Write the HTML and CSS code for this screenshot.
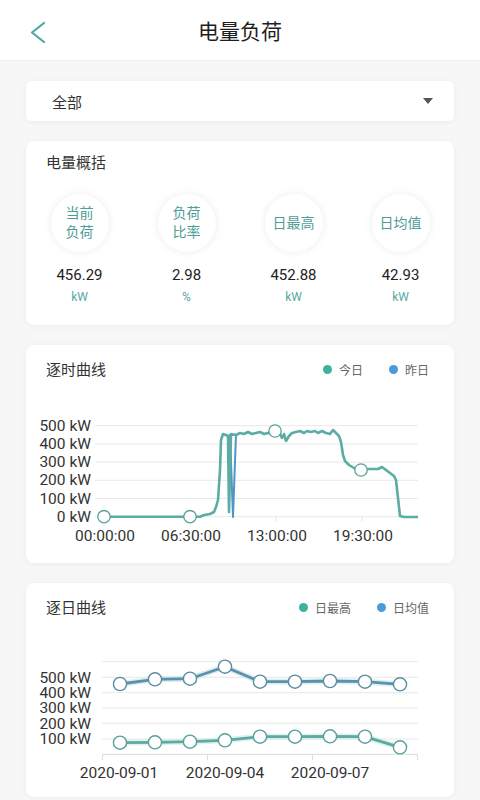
FILE: index.html
```html
<!DOCTYPE html>
<html>
    <head>
        <meta http-equiv="content-type" content="text/html; charset=utf-8" />
        <meta name="viewport" content="width=device-width, initial-scale=1.0">
        <title>电量负荷</title>
        <link rel="stylesheet" href="styles.css">
    </head>
    <body>
        <header class="topbar">
            <svg class="back" width="60" height="60" viewBox="0 0 60 60">
                <polyline points="44,23 32,32.5 44,42" fill="none" stroke="#4ea8a1" stroke-width="2.2" stroke-linecap="round" stroke-linejoin="round"/>
            </svg>
            <h1>电量负荷</h1>
            <div></div>
        </header>

        <main class="page">
            <div class="card picker">
                <span>全部</span>
                <i class="caret"></i>
            </div>

            <section class="card summary">
                <h2 class="card-title">电量概括</h2>
                <div class="stats">
                    <div class="stat">
                        <div class="ring">当前<br>负荷</div>
                        <div class="value">456.29</div>
                        <div class="unit">kW</div>
                    </div>
                    <div class="stat">
                        <div class="ring">负荷<br>比率</div>
                        <div class="value">2.98</div>
                        <div class="unit">%</div>
                    </div>
                    <div class="stat">
                        <div class="ring">日最高</div>
                        <div class="value">452.88</div>
                        <div class="unit">kW</div>
                    </div>
                    <div class="stat">
                        <div class="ring">日均值</div>
                        <div class="value">42.93</div>
                        <div class="unit">kW</div>
                    </div>
                </div>
            </section>

            <section class="card chart-card">
                <div class="chart-head">
                    <h2 class="card-title">逐时曲线</h2>
                    <div class="legend">
                        <span class="key"><i class="dot teal"></i>今日</span>
                        <span class="key"><i class="dot blue"></i>昨日</span>
                    </div>
                </div>
                <svg class="chart hourly" width="428" height="172" viewBox="26 391 428 172">
                    <g stroke="#e8e8e8" stroke-width="1">
                        <line x1="95" y1="425.7" x2="418" y2="425.7"/>
                        <line x1="95" y1="443.9" x2="418" y2="443.9"/>
                        <line x1="95" y1="462.1" x2="418" y2="462.1"/>
                        <line x1="95" y1="480.3" x2="418" y2="480.3"/>
                        <line x1="95" y1="498.5" x2="418" y2="498.5"/>
                        <line x1="95" y1="516.7" x2="418" y2="516.7"/>
                        <line x1="190" y1="516.7" x2="190" y2="522"/>
                        <line x1="276" y1="516.7" x2="276" y2="522"/>
                        <line x1="362" y1="516.7" x2="362" y2="522"/>
                    </g>
                    <g class="axis-y" text-anchor="end">
                        <text x="91" y="431">500 kW</text>
                        <text x="91" y="449">400 kW</text>
                        <text x="91" y="467">300 kW</text>
                        <text x="91" y="485">200 kW</text>
                        <text x="91" y="504">100 kW</text>
                        <text x="91" y="522">0 kW</text>
                    </g>
                    <g class="axis-x" text-anchor="middle">
                        <text x="105" y="541">00:00:00</text>
                        <text x="191" y="541">06:30:00</text>
                        <text x="277" y="541">13:00:00</text>
                        <text x="363" y="541">19:30:00</text>
                    </g>
                    <polyline fill="none" stroke="#4f95c8" stroke-width="2" stroke-linejoin="round" points="230,434 233,517 236,434"/>
                    <polyline fill="none" stroke="#5aaca4" stroke-width="2.6" stroke-linejoin="round"
                        points="104,516.7 190,516.7 200,516.7 204,515 210,514 214,512 216,507 218,500 220,470 221,440 223,434 226,435 228,436 229,512 231,434 236,435 240,433 244,434 248,432 252,434 256,433 260,432 264,434 268,433 272,432 276,431 280,434 282,438 284,434 286,441 289,436 292,433 296,432 300,431 304,433 307,431 311,432 315,431 318,433 322,431 326,433 330,434 333,430 336,433 339,436 341,442 343,455 345,461 349,465 354,468 358,470 362,470 366,469 372,469 378,469 382,467 386,470 390,473 394,476 396,480 398,498 400,516 404,517 418,517"/>
                    <g fill="#fff" stroke="#5a9f9a" stroke-width="1.3">
                        <circle cx="104" cy="516.7" r="6.2"/>
                        <circle cx="190" cy="516.7" r="6.2"/>
                        <circle cx="275" cy="431" r="6.2"/>
                        <circle cx="361" cy="470" r="6.2"/>
                    </g>
                </svg>
            </section>

            <section class="card chart-card">
                <div class="chart-head">
                    <h2 class="card-title">逐日曲线</h2>
                    <div class="legend">
                        <span class="key"><i class="dot teal"></i>日最高</span>
                        <span class="key"><i class="dot blue"></i>日均值</span>
                    </div>
                </div>
                <svg class="chart daily" width="428" height="168" viewBox="26 629 428 168">
                    <g stroke="#e8e8e8" stroke-width="1">
                        <line x1="102" y1="661.7" x2="418" y2="661.7"/>
                        <line x1="102" y1="677.3" x2="418" y2="677.3"/>
                        <line x1="102" y1="692.7" x2="418" y2="692.7"/>
                        <line x1="102" y1="708" x2="418" y2="708"/>
                        <line x1="102" y1="723.3" x2="418" y2="723.3"/>
                        <line x1="102" y1="739" x2="418" y2="739"/>
                    </g>
                    <g stroke="#dcdcdc" stroke-width="1">
                        <line x1="102" y1="754.4" x2="418" y2="754.4"/>
                        <line x1="102.5" y1="754.4" x2="102.5" y2="760"/>
                        <line x1="207.5" y1="754.4" x2="207.5" y2="760"/>
                        <line x1="312.5" y1="754.4" x2="312.5" y2="760"/>
                        <line x1="417.5" y1="754.4" x2="417.5" y2="760"/>
                    </g>
                    <g class="axis-y" text-anchor="end">
                        <text x="91" y="682.5">500 kW</text>
                        <text x="91" y="698">400 kW</text>
                        <text x="91" y="713.3">300 kW</text>
                        <text x="91" y="728.6">200 kW</text>
                        <text x="91" y="744">100 kW</text>
                    </g>
                    <g class="axis-x" text-anchor="middle">
                        <text x="119" y="777.5">2020-09-01</text>
                        <text x="225" y="777.5">2020-09-04</text>
                        <text x="330" y="777.5">2020-09-07</text>
                    </g>
                    <polyline fill="none" stroke="#c9e0ea" stroke-width="6" stroke-linejoin="round" opacity="0.6"
                        points="120,684 155,679.3 190,678.7 225,666.7 260,681.7 295,681.7 330,681 365,681.7 400,684.3"/>
                    <polyline fill="none" stroke="#5892ab" stroke-width="2.8" stroke-linejoin="round"
                        points="120,684 155,679.3 190,678.7 225,666.7 260,681.7 295,681.7 330,681 365,681.7 400,684.3"/>
                    <polyline fill="none" stroke="#cbe8e4" stroke-width="6" stroke-linejoin="round" opacity="0.6"
                        points="120,742.7 155,742.3 190,741.7 225,740.3 260,736.7 295,736.7 330,736.3 365,736.7 400,747.3"/>
                    <polyline fill="none" stroke="#5aaba3" stroke-width="2.8" stroke-linejoin="round"
                        points="120,742.7 155,742.3 190,741.7 225,740.3 260,736.7 295,736.7 330,736.3 365,736.7 400,747.3"/>
                    <g fill="#fff" stroke="#5a8ea3" stroke-width="1.4">
                        <circle cx="120" cy="684" r="6.6"/>
                        <circle cx="155" cy="679.3" r="6.6"/>
                        <circle cx="190" cy="678.7" r="6.6"/>
                        <circle cx="225" cy="666.7" r="6.6"/>
                        <circle cx="260" cy="681.7" r="6.6"/>
                        <circle cx="295" cy="681.7" r="6.6"/>
                        <circle cx="330" cy="681" r="6.6"/>
                        <circle cx="365" cy="681.7" r="6.6"/>
                        <circle cx="400" cy="684.3" r="6.6"/>
                    </g>
                    <g fill="#fff" stroke="#5a9f9a" stroke-width="1.4">
                        <circle cx="120" cy="742.7" r="6.6"/>
                        <circle cx="155" cy="742.3" r="6.6"/>
                        <circle cx="190" cy="741.7" r="6.6"/>
                        <circle cx="225" cy="740.3" r="6.6"/>
                        <circle cx="260" cy="736.7" r="6.6"/>
                        <circle cx="295" cy="736.7" r="6.6"/>
                        <circle cx="330" cy="736.3" r="6.6"/>
                        <circle cx="365" cy="736.7" r="6.6"/>
                        <circle cx="400" cy="747.3" r="6.6"/>
                    </g>
                </svg>
            </section>
        </main>
    </body>
</html>
```
FILE: styles.css
```css
* {
    padding: 0;
    margin: 0;
    box-sizing: border-box;
}

body {
    font-family: Roboto, "Noto Sans CJK SC", sans-serif;
    background: #f7f7f7;
    color: #222;
    width: 480px;
}

.topbar {
    display: grid;
    grid-template-columns: 60px 1fr 60px;
    align-items: center;
    height: 61px;
    background: #fff;
    border-bottom: 1px solid #eeeeee;

    h1 {
        text-align: center;
        font-size: 21px;
        font-weight: 400;
        color: #1e1e1e;
    }

    .back {
        display: block;
    }
}

.page {
    display: flex;
    flex-direction: column;
    gap: 20px;
    padding: 20px 26px;
}

.card {
    background: #fff;
    border-radius: 8px;
    box-shadow: 0 1px 6px rgba(0, 0, 0, 0.05);
}

.card-title {
    font-size: 15px;
    font-weight: 400;
    line-height: 20px;
    color: #333;
}

.picker {
    display: flex;
    align-items: center;
    justify-content: space-between;
    height: 40px;
    padding: 0 21px 0 26px;
    border-radius: 5px;
    font-size: 15px;
    color: #333;

    .caret {
        width: 0;
        height: 0;
        border-left: 5px solid transparent;
        border-right: 5px solid transparent;
        border-top: 6px solid #555;
    }
}

.summary {
    padding: 12px 0 20px;

    .card-title {
        padding: 0 20px;
    }
}

.stats {
    display: grid;
    grid-template-columns: repeat(4, 1fr);
    margin-top: 21px;
}

.stat {
    display: flex;
    flex-direction: column;
    align-items: center;

    .ring {
        display: flex;
        align-items: center;
        justify-content: center;
        width: 58px;
        height: 58px;
        border-radius: 50%;
        background: #fff;
        box-shadow: 0 0 8px rgba(0, 0, 0, 0.08);
        font-size: 14px;
        line-height: 19px;
        text-align: center;
        color: #4f9d97;
    }

    .value {
        margin-top: 13px;
        font-size: 15px;
        line-height: 20px;
        color: #222;
    }

    .unit {
        margin-top: 4px;
        font-size: 12px;
        line-height: 16px;
        color: #55aaa2;
    }
}

.chart-head {
    display: flex;
    align-items: center;
    justify-content: space-between;
    height: 46px;
    padding: 3px 25px 0 20px;
}

.legend {
    display: flex;
    gap: 26px;
    font-size: 12px;
    color: #666;

    .key {
        display: flex;
        align-items: center;
        gap: 7px;
    }

    .dot {
        width: 9px;
        height: 9px;
        border-radius: 50%;
    }

    .teal {
        background: #3db39f;
    }

    .blue {
        background: #4b9bd6;
    }
}

.chart {
    display: block;

    text {
        font-family: Roboto, sans-serif;
        font-size: 15.5px;
        fill: #333;
    }
}
```
